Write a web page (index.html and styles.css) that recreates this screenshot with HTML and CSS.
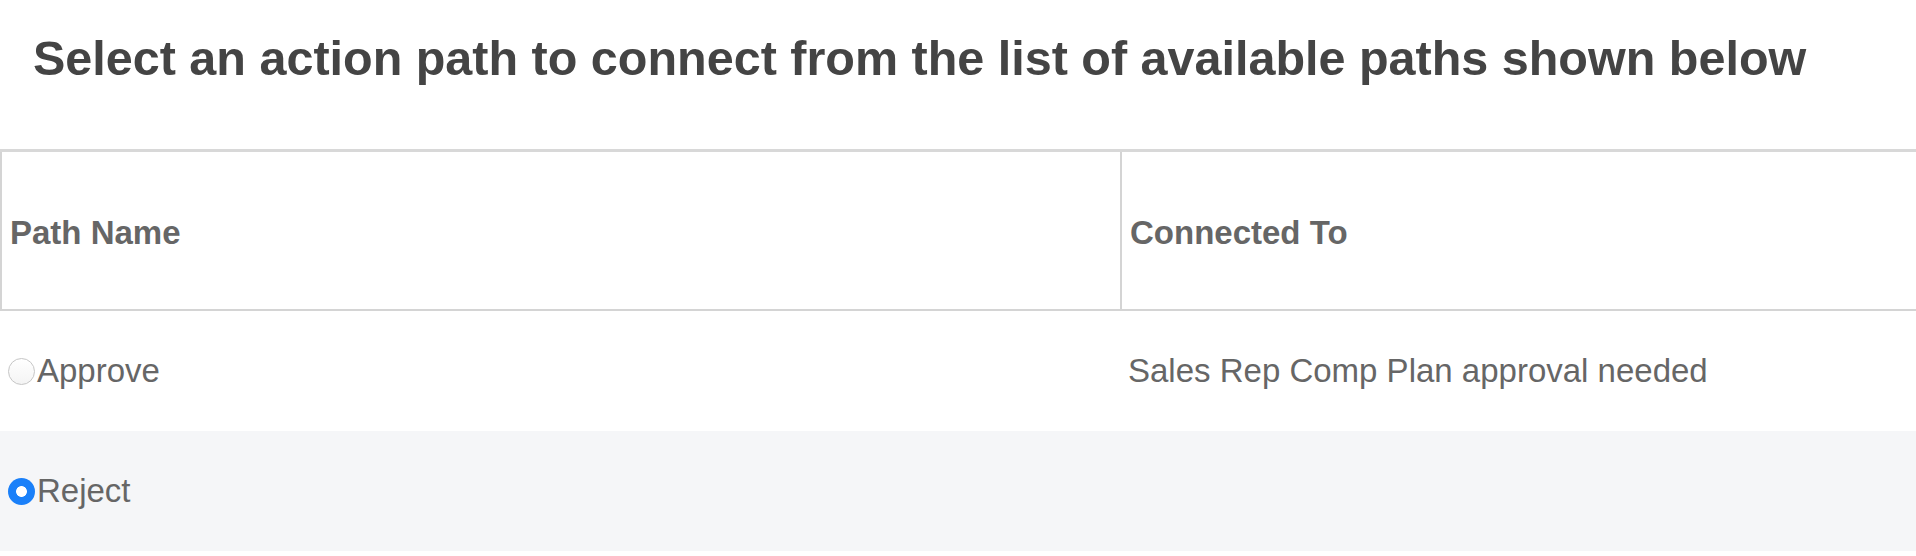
FILE: index.html
```html
<html lang="en">

<head>
    <meta charset="UTF-8">
    <meta name="viewport" content="width=device-width, initial-scale=1.0">
    <title>Connect Action Path</title>
    <link rel="stylesheet" href="styles.css">
</head>

<body>
    <h1 class="title">Select an action path to connect from the list of available paths shown below</h1>

    <table class="paths">
        <thead>
            <tr>
                <th class="col-name">Path Name</th>
                <th class="col-target">Connected To</th>
            </tr>
        </thead>
        <tbody>
            <tr>
                <td>
                    <label class="choice">
                        <input type="radio" name="path" value="approve">
                        <span>Approve</span>
                    </label>
                </td>
                <td class="target">Sales Rep Comp Plan approval needed</td>
            </tr>
            <tr class="alt">
                <td>
                    <label class="choice">
                        <input type="radio" name="path" value="reject" checked>
                        <span>Reject</span>
                    </label>
                </td>
                <td class="target"></td>
            </tr>
        </tbody>
    </table>
</body>

</html>
```

FILE: styles.css
```css
body {
    margin: 0;
    background: #ffffff;
    font-family: 'Liberation Sans', Arial, sans-serif;
    color: #666666;
}

.title {
    margin: 0 0 63px 0;
    padding: 30px 33px 0 33px;
    font-size: 48.5px;
    line-height: 56px;
    font-weight: bold;
    color: #444444;
}

.paths {
    width: 100%;
    border-collapse: separate;
    border-spacing: 0;
    border-top: 3px solid #d8d8d8;
}

.paths th {
    height: 159px;
    padding: 5px 0 0 8px;
    text-align: left;
    font-size: 33px;
    font-weight: bold;
    color: #666666;
    border-left: 2px solid #d4d4d4;
    border-bottom: 2px solid #d4d4d4;
    box-sizing: border-box;
}

.paths .col-name {
    width: 1120px;
}

.paths td {
    height: 120px;
    padding: 0;
    font-size: 33px;
    color: #666666;
    vertical-align: middle;
}

.paths td.target {
    padding-left: 8px;
}

.paths tr.alt td {
    background: #f5f6f8;
}

.choice {
    display: flex;
    align-items: center;
    gap: 2px;
    padding-left: 8px;
}

.choice input {
    appearance: none;
    -webkit-appearance: none;
    width: 27px;
    height: 27px;
    margin: 0;
    border-radius: 50%;
    border: 1px solid #c6c6c6;
    background: linear-gradient(#ffffff, #f4f4f4);
    box-sizing: border-box;
}

.choice input:checked {
    border: none;
    background: radial-gradient(circle, #ffffff 0 5px, #1a80f9 5.8px);
}
```
